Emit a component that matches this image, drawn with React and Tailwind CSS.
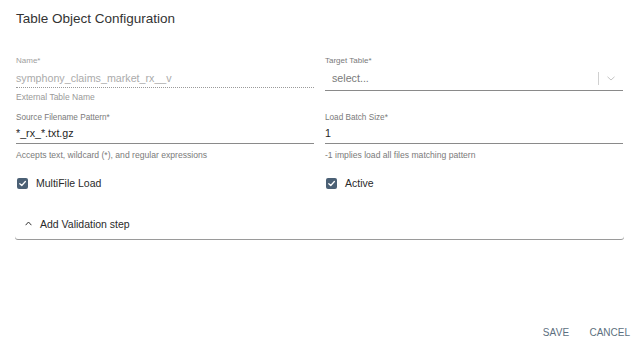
import React from 'react'

const FONT = { fontFamily: '"Liberation Sans", Arial, sans-serif' }

function Check({ label }) {
  return (
    <label className="flex items-center gap-[8px] h-[12px]">
      <span className="w-[11px] h-[11px] rounded-[2px] bg-[#4b6075] flex items-center justify-center ml-[1px]">
        <svg width="9" height="9" viewBox="0 0 10 10" fill="none">
          <path d="M2 5.2 L4.2 7.2 L8.2 2.8" stroke="#fff" strokeWidth="1.4" strokeLinecap="round" strokeLinejoin="round" />
        </svg>
      </span>
      <span className="text-[10.5px] leading-[12px] text-[#2a2a2a]">{label}</span>
    </label>
  )
}

export default function App() {
  return (
    <div className="w-[638px] h-[350px] bg-white flex flex-col" style={FONT}>
      <h1 className="pt-[11px] px-4 text-[13.5px] leading-[16px] text-[#333]">Table Object Configuration</h1>

      <div className="mt-[29px] pl-4 pr-[15px] grid grid-cols-2 gap-x-[11px]">
        {/* Name */}
        <div>
          <div className="text-[8px] leading-[10px] text-[#a0a0a0]">Name*</div>
          <div className="pt-[6px] pb-[3px] text-[10.7px] leading-[12px] text-[#ababab] border-b border-dotted border-[#9a9a9a]">
            symphony_claims_market_rx__v
          </div>
          <div className="mt-[4px] text-[8.5px] leading-[10px] text-[#999]">External Table Name</div>
        </div>

        {/* Target table */}
        <div>
          <div className="text-[8px] leading-[10px] text-[#7a7a7a]">Target Table*</div>
          <div className="h-[25px] flex items-center border-b border-[#8a8a8a]">
            <span className="pl-[7px] flex-1 text-[10.7px] leading-[12px] text-[#7a7a7a]">select...</span>
            <span className="w-px h-[13px] bg-[#d0d0d0]" />
            <svg className="ml-[8px] mr-[8px]" width="8" height="5" viewBox="0 0 8 5" fill="none">
              <path d="M0.5 0.8 L4 4 L7.5 0.8" stroke="#c4c4c4" strokeWidth="1" />
            </svg>
          </div>
        </div>

        {/* Source filename */}
        <div className="mt-[11px]">
          <div className="text-[8.2px] leading-[10px] text-[#7a7a7a]">Source Filename Pattern*</div>
          <div className="pt-[4px] pb-[4px] text-[10.7px] leading-[12px] text-[#1f1f1f] border-b border-[#8a8a8a]">
            *_rx_*.txt.gz
          </div>
          <div className="mt-[6px] text-[8.6px] leading-[10px] text-[#7a7a7a]">Accepts text, wildcard (*), and regular expressions</div>
        </div>

        {/* Load batch size */}
        <div className="mt-[11px]">
          <div className="text-[8.2px] leading-[10px] text-[#7a7a7a]">Load Batch Size*</div>
          <div className="pt-[4px] pb-[4px] text-[10.7px] leading-[12px] text-[#1f1f1f] border-b border-[#8a8a8a]">
            1
          </div>
          <div className="mt-[6px] text-[8.6px] leading-[10px] text-[#7a7a7a]">-1 implies load all files matching pattern</div>
        </div>

        <div className="mt-[17px]">
          <Check label="MultiFile Load" />
        </div>
        <div className="mt-[17px]">
          <Check label="Active" />
        </div>
      </div>

      <div className="mt-[19px] ml-[15px] mr-[14px] h-[31px] rounded-b-[3px] bg-white shadow-[0_1px_0_#9a9a9a] flex items-center pl-[10px]">
        <svg width="7" height="5" viewBox="0 0 7 5" fill="none">
          <path d="M0.6 4.2 L3.5 1 L6.4 4.2" stroke="#333" strokeWidth="1" />
        </svg>
        <span className="ml-[8px] text-[10.5px] leading-[12px] text-[#2a2a2a]">Add Validation step</span>
      </div>

      <div className="mt-auto mb-[11px] flex justify-end pr-[8px] gap-[20px]">
        <button className="text-[10px] leading-[12px] tracking-[0.2px] text-[#5d6f80]">SAVE</button>
        <button className="text-[10px] leading-[12px] text-[#5d6f80]">CANCEL</button>
      </div>
    </div>
  )
}
